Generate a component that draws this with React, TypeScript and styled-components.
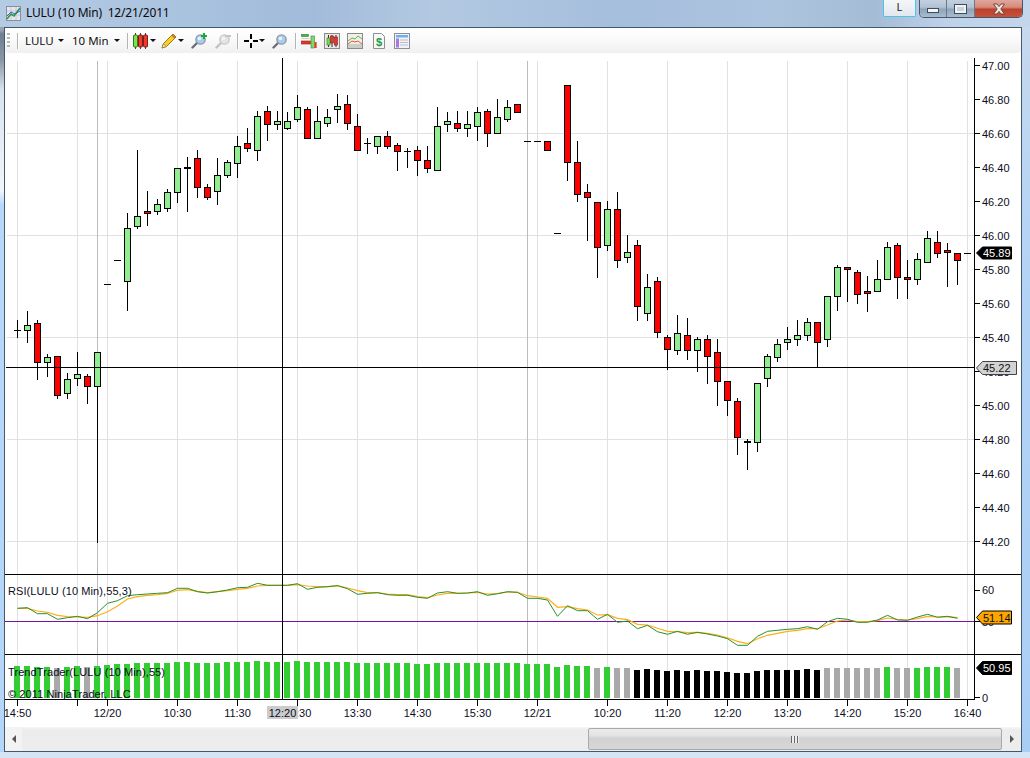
import React from "react";
import styled, { createGlobalStyle } from "styled-components";

const Global = createGlobalStyle`
  html, body { margin: 0; padding: 0; background: #b9d9fb; overflow: hidden; }
`;

const Frame = styled.div`
  width: 1030px;
  height: 758px;
  box-sizing: border-box;
  display: flex;
  flex-direction: column;
  padding: 0 8px 6px 4px;
  font-family: "Noto Sans", "Liberation Sans", sans-serif;
  background:
    linear-gradient(90deg, #b4cbe4 0%, #a9c2de 18%, #a2bbda 30%, #b3c9e2 42%, #a5bedc 60%, #adc4df 75%, #a5bcd7 85%, #bed2e9 92%, #c3d6eb 100%) top / 100% 27px no-repeat,
    linear-gradient(180deg, #d5e5f5 0%, #d5e5f5 100%) bottom / 100% 6px no-repeat,
    linear-gradient(180deg, #9aa4b0 0px, #9aa4b0 30px, #6d7f92 34px, #8b97a4 60px, #d9e3ee 90px, #f2f6fb 190px, #b7d8fb 205px, #b4d6fb 100%) left / 4px 100% no-repeat,
    linear-gradient(180deg, #c8d9ec 0%, #b5d4f6 30%, #a9cef6 100%);
`;

const TitleBar = styled.div`
  height: 27px;
  display: flex;
  align-items: flex-start;
  flex: none;
`;

const TitleIcon = styled.svg`
  width: 15px;
  height: 15px;
  margin: 6px 0 0 2px;
  flex: none;
`;

const TitleText = styled.div`
  margin: 5px 0 0 5px;
  font-size: 12px;
  letter-spacing: -0.2px;
  line-height: 16px;
  color: #0a0a0a;
  white-space: pre;
`;

const WindowButtons = styled.div`
  margin-left: auto;
  display: flex;
  align-items: flex-start;
  margin-right: -1px;
`;

const LButton = styled.div`
  width: 31px;
  height: 16px;
  margin-right: 3px;
  border: 1px solid #4fc3e8;
  border-top: none;
  border-radius: 0 0 2px 2px;
  background: linear-gradient(180deg, #f4f6f8, #e3e8ee);
  font-size: 11px;
  line-height: 14px;
  text-align: center;
  color: #222;
`;

const CaptionGroup = styled.div`
  display: flex;
  height: 17px;
  border: 1px solid #45586c;
  border-top: none;
  border-radius: 0 0 5px 5px;
  overflow: hidden;
`;

const CaptionBtn = styled.div<{ $w: number; $close?: boolean }>`
  width: ${(p) => p.$w}px;
  display: flex;
  align-items: center;
  justify-content: center;
  border-left: ${(p) => (p.$w === 26 ? "none" : "1px solid #66788c")};
  background: ${(p) =>
    p.$close
      ? "linear-gradient(180deg, #dfa79c 0%, #d9897a 42%, #b8432c 55%, #c9513a 100%)"
      : "linear-gradient(180deg, #c3d0de 0%, #b2c2d3 42%, #8fa4ba 55%, #a9bccf 100%)"};
`;

const MinGlyph = styled.div`
  width: 10px;
  height: 3px;
  margin-top: 4px;
  background: #f4f6f8;
  border: 1px solid #3e4c5c;
`;

const MaxGlyph = styled.div`
  width: 7px;
  height: 4px;
  background: #c8d3de;
  border: 2px solid #f0f3f6;
  outline: 1px solid #3e4c5c;
`;

const Window = styled.div`
  flex: 1;
  min-height: 0;
  display: flex;
  flex-direction: column;
  border: 1px solid #46586b;
  background: #fff;
`;

const Toolbar = styled.div`
  height: 25px;
  flex: none;
  display: flex;
  align-items: center;
  box-sizing: border-box;
  background: linear-gradient(180deg, #ffffff 0%, #fafafa 45%, #f0f0f0 100%);
  border-radius: 0 0 4px 4px;
  font-size: 12px;
  color: #111;
`;

const Grip = styled.div`
  width: 3px;
  height: 15px;
  margin-left: 2px;
  background: repeating-linear-gradient(180deg, #b8b8b8 0 2px, transparent 2px 4px);
`;

const Sep = styled.div<{ $ml: number }>`
  width: 1px;
  height: 16px;
  margin-left: ${(p) => p.$ml}px;
  background: #b4b4b4;
  box-shadow: 1px 0 0 #fff;
`;

const ToolLabel = styled.span<{ $ml: number; $w: number }>`
  margin-left: ${(p) => p.$ml}px;
  width: ${(p) => p.$w}px;
  font-size: 11.5px;
  white-space: nowrap;
`;

const Caret = styled.span<{ $ml: number }>`
  margin-left: ${(p) => p.$ml}px;
  width: 0;
  height: 0;
  border-left: 3px solid transparent;
  border-right: 3px solid transparent;
  border-top: 3px solid #111;
`;

const ToolIcon = styled.svg<{ $ml: number }>`
  margin-left: ${(p) => p.$ml}px;
  width: 16px;
  height: 16px;
  flex: none;
`;

const ChartSvg = styled.svg`
  display: block;
  flex: none;
  width: 1016px;
  height: 674px;
`;

const AxisText = styled.text`
  font-family: "Liberation Sans", Arial, sans-serif;
  font-size: 11px;
  fill: #0c0c1c;
`;

const PanelLabel = styled(AxisText)`
  letter-spacing: 0.09px;
`;

const ScrollBar = styled.div`
  flex: 1;
  display: flex;
  align-items: stretch;
  background: linear-gradient(180deg, #f6f6f6 0, #ececec 3px, #ededed 100%);
`;

const ScrollArrow = styled.div<{ $w: number; $dir: "left" | "right" }>`
  width: ${(p) => p.$w}px;
  flex: none;
  display: flex;
  align-items: center;
  justify-content: center;
  background: ${(p) => (p.$dir === "left" ? "#f3f3f3" : "transparent")};
  &::before {
    content: "";
    border-top: 4px solid transparent;
    border-bottom: 4px solid transparent;
    ${(p) => (p.$dir === "left" ? "border-right: 4px solid #555;" : "border-left: 4px solid #555;")}
  }
`;

const ScrollTrack = styled.div`
  width: 566px;
  flex: none;
`;

const ScrollThumb = styled.div`
  width: 414px;
  flex: none;
  margin: 1px 0 1px 0;
  box-sizing: border-box;
  border: 1px solid #a9a9a9;
  border-radius: 2px;
  background: linear-gradient(180deg, #ececec 0%, #e2e2e2 35%, #d2d2d2 45%, #d6d6d6 100%);
  display: flex;
  align-items: center;
  justify-content: center;
`;

const Gripper = styled.div`
  width: 8px;
  height: 7px;
  background: repeating-linear-gradient(90deg, #666 0 1px, #eee 1px 3px);
`;

type K = "g" | "r" | "x" | "d";
type C = [number, number, number, number, K];
const candles: C[] = [
  [320, 337, 330, 330, "x"],
  [311, 342, 325, 330, "g"],
  [320, 379, 323, 362, "r"],
  [354, 376, 357, 362, "g"],
  [356, 398, 356, 395, "r"],
  [373, 398, 379, 393, "g"],
  [352, 385, 374, 378, "g"],
  [374, 403, 376, 386, "r"],
  [352, 542, 352, 386, "g"],
  [284, 284, 284, 284, "d"],
  [260, 260, 260, 260, "d"],
  [213, 310, 228, 281, "g"],
  [150, 228, 216, 226, "g"],
  [191, 225, 211, 213, "r"],
  [199, 214, 204, 211, "g"],
  [189, 211, 192, 208, "g"],
  [168, 202, 168, 192, "g"],
  [157, 211, 167, 168, "g"],
  [150, 197, 158, 187, "r"],
  [184, 199, 187, 197, "r"],
  [158, 204, 175, 191, "g"],
  [160, 177, 162, 175, "g"],
  [136, 177, 146, 163, "g"],
  [128, 151, 143, 148, "r"],
  [111, 160, 116, 150, "g"],
  [106, 140, 111, 124, "r"],
  [111, 129, 121, 124, "g"],
  [112, 129, 121, 128, "g"],
  [95, 121, 107, 119, "g"],
  [107, 138, 109, 138, "r"],
  [106, 138, 121, 138, "g"],
  [109, 126, 117, 123, "g"],
  [94, 122, 106, 109, "g"],
  [95, 129, 104, 123, "r"],
  [114, 150, 126, 150, "r"],
  [138, 153, 143, 143, "x"],
  [136, 153, 136, 146, "g"],
  [131, 148, 136, 146, "r"],
  [143, 170, 145, 151, "r"],
  [148, 167, 151, 151, "x"],
  [146, 175, 150, 160, "r"],
  [146, 172, 160, 168, "r"],
  [107, 170, 126, 170, "g"],
  [112, 131, 121, 124, "g"],
  [111, 131, 123, 128, "r"],
  [111, 136, 124, 128, "g"],
  [107, 140, 112, 126, "g"],
  [109, 146, 111, 133, "r"],
  [99, 133, 117, 133, "g"],
  [100, 121, 107, 119, "g"],
  [104, 112, 104, 112, "r"],
  [141, 141, 141, 141, "d"],
  [141, 141, 141, 141, "d"],
  [141, 150, 141, 150, "r"],
  [233, 233, 233, 233, "d"],
  [85, 180, 85, 162, "r"],
  [141, 201, 162, 194, "r"],
  [184, 240, 192, 197, "r"],
  [202, 277, 202, 247, "r"],
  [201, 250, 209, 245, "g"],
  [192, 267, 209, 260, "r"],
  [235, 262, 252, 257, "g"],
  [240, 320, 245, 306, "r"],
  [274, 320, 287, 313, "g"],
  [277, 337, 281, 332, "r"],
  [335, 369, 337, 349, "r"],
  [315, 354, 333, 350, "g"],
  [318, 359, 335, 350, "r"],
  [337, 371, 339, 350, "g"],
  [335, 383, 339, 356, "r"],
  [339, 405, 352, 381, "r"],
  [381, 415, 381, 400, "r"],
  [398, 454, 401, 437, "r"],
  [439, 469, 441, 442, "g"],
  [383, 451, 383, 442, "g"],
  [354, 386, 356, 378, "g"],
  [339, 361, 344, 357, "g"],
  [327, 349, 339, 342, "g"],
  [320, 345, 335, 339, "g"],
  [318, 340, 322, 335, "g"],
  [322, 367, 322, 342, "r"],
  [296, 346, 296, 339, "g"],
  [265, 310, 267, 296, "g"],
  [267, 301, 267, 269, "r"],
  [270, 303, 272, 294, "r"],
  [276, 311, 291, 293, "r"],
  [260, 291, 279, 291, "g"],
  [242, 279, 247, 279, "g"],
  [243, 298, 245, 277, "r"],
  [260, 298, 277, 279, "r"],
  [253, 284, 259, 279, "g"],
  [231, 262, 238, 262, "g"],
  [231, 257, 242, 253, "r"],
  [243, 286, 250, 252, "r"],
  [253, 284, 253, 260, "r"],
];

const barTops = [
  666, 666, 667, 667, 668, 667, 666, 667, 666, 665,
  664, 664, 663, 663, 663, 663, 662, 662, 663, 663,
  663, 662, 662, 662, 661, 662, 662, 662, 661, 662,
  662, 662, 662, 662, 663, 663, 663, 663, 663, 663,
  664, 664, 663, 663, 663, 663, 663, 663, 663, 663,
  663, 664, 664, 664, 667, 665, 666, 666, 668, 667,
  668, 668, 670, 669, 670, 671, 670, 671, 670, 671,
  671, 672, 673, 673, 671, 670, 670, 670, 670, 669,
  670, 668, 668, 668, 668, 668, 668, 667, 668, 668,
  668, 667, 667, 667, 668,
];

const rsiGreen = [
  115, 113, 131, 131, 148, 143, 139, 146, 128, 100,
  92, 77, 74, 72, 70, 68, 55, 55, 65, 69,
  65, 60, 53, 52, 40, 46, 46, 46, 41, 58,
  52, 50, 47, 56, 73, 70, 68, 74, 76, 76,
  82, 85, 69, 65, 70, 69, 65, 76, 71, 65,
  67, 85, 85, 90, 139, 107, 122, 122, 148, 133,
  157, 153, 176, 166, 185, 193, 184, 193, 187, 192,
  198, 206, 226, 226, 199, 184, 181, 178, 176, 170,
  178, 155, 145, 148, 157, 157, 150, 136, 150, 151,
  141, 133, 142, 139, 145,
];

const rsiOrange = [
  115, 115, 123, 127, 136, 140, 141, 142, 137, 125,
  108, 87, 80, 76, 74, 70, 61, 59, 64, 68,
  65, 62, 58, 55, 48, 46, 46, 46, 44, 48,
  50, 50, 47, 54, 62, 68, 68, 72, 74, 74,
  80, 83, 75, 70, 70, 69, 67, 72, 71, 66,
  67, 77, 81, 85, 112, 110, 116, 120, 135, 134,
  145, 149, 163, 165, 175, 184, 185, 188, 187, 190,
  195, 203, 214, 221, 206, 196, 190, 184, 181, 176,
  176, 165, 153, 150, 155, 155, 152, 144, 148, 150,
  146, 139, 141, 140, 143,
];

const xOf = (i: number) => 17 + i * 10;
const GRAY = new Set([57, 87, 597, 617, 627, 827, 837, 847, 857, 867, 877, 897, 907, 957]);
const barColor = (x: number) =>
  GRAY.has(x) ? "#a9a9a9" : x >= 637 && x <= 817 ? "#000" : "#32cd32";

const rsiPoints = (arr: number[]) =>
  arr.map((v, i) => `${xOf(i) + 0.5},${(570 + v / 3).toFixed(1)}`).join(" ");

const vGrid = [17, 77, 107, 177, 237, 297, 357, 417, 477, 537, 607, 667, 727, 787, 847, 907, 967];
const hGrid = [133, 235, 337, 439, 541];
const prices = [
  "47.00", "46.80", "46.60", "46.40", "46.20", "46.00", "45.80", "45.60", "45.40",
  "45.20", "45.00", "44.80", "44.60", "44.40", "44.20",
];
const timeLabels: [number, string][] = [
  [17, "14:50"], [107, "12/20"], [177, "10:30"], [237, "11:30"], [297, "12:30"],
  [357, "13:30"], [417, "14:30"], [477, "15:30"], [537, "12/21"], [607, "10:20"],
  [667, "11:20"], [727, "12:20"], [787, "13:20"], [847, "14:20"], [907, "15:20"], [967, "16:40"],
];
const timeTicks = [17, 77, 107, 177, 237, 297, 357, 417, 477, 537, 607, 667, 727, 787, 847, 907, 967];

const Candle: React.FC<{ c: C; x: number }> = ({ c, x }) => {
  const [hi, lo, top, bot, k] = c;
  const cx = x + 0.5;
  if (k === "d") return <line x1={x - 3} x2={x + 4} y1={top + 0.5} y2={top + 0.5} stroke="#000" />;
  if (k === "x")
    return (
      <g stroke="#000">
        <line x1={cx} x2={cx} y1={hi} y2={lo + 1} />
        <line x1={x - 3} x2={x + 4} y1={top + 0.5} y2={top + 0.5} />
      </g>
    );
  return (
    <g stroke="#000">
      <line x1={cx} x2={cx} y1={hi} y2={lo + 1} />
      <rect
        x={x - 3 + 0.5}
        y={top + 0.5}
        width={6}
        height={bot - top}
        fill={k === "g" ? "#90ee90" : "#ff0000"}
      />
    </g>
  );
};

const Flag: React.FC<{ y: number; right: number; h: number; fill: string; color: string; stroke: string; text: string }> = ({
  y, right, h, fill, color, stroke, text,
}) => (
  <g>
    <polygon
      points={`976.5,${y} 982.5,${y - h} ${right},${y - h} ${right},${y + h} 982.5,${y + h}`}
      fill={fill}
      stroke={stroke}
    />
    <AxisText x={983} y={y + 4} style={{ fill: color }}>
      {text}
    </AxisText>
  </g>
);

const Chart = () => (
  <ChartSvg viewBox="5 53 1016 674" shapeRendering="crispEdges">
    <g stroke="#e1e1e1">
      {vGrid.map((x) => (
        <line key={x} x1={x + 0.5} x2={x + 0.5} y1={61} y2={699} />
      ))}
      {hGrid.map((y) => (
        <line key={y} x1={7} x2={974} y1={y + 0.5} y2={y + 0.5} />
      ))}
    </g>
    <g stroke="#bcbcbc">
      <line x1={97.5} x2={97.5} y1={61} y2={699} />
      <line x1={527.5} x2={527.5} y1={61} y2={699} />
    </g>
    {candles.map((c, i) => (
      <Candle key={i} c={c} x={xOf(i)} />
    ))}
    <line x1={964} x2={971} y1={253.5} y2={253.5} stroke="#000" />

    <line x1={5} x2={974} y1={621.5} y2={621.5} stroke="#7a12a6" />
    <g shapeRendering="geometricPrecision" fill="none">
      <polyline points={rsiPoints(rsiOrange)} stroke="#ffae1a" strokeWidth={1.2} />
      <polyline points={rsiPoints(rsiGreen)} stroke="#2a8f2a" strokeWidth={1} />
    </g>

    {barTops.map((t, i) => (
      <rect key={i} x={xOf(i) - 3} y={t} width={6} height={698 - t} fill={barColor(xOf(i))} />
    ))}

    <g stroke="#000">
      <line x1={5} x2={1021} y1={574.5} y2={574.5} />
      <line x1={5} x2={1021} y1={654.5} y2={654.5} />
      <line x1={5} x2={975} y1={699.5} y2={699.5} />
      <line x1={974.5} x2={974.5} y1={58} y2={700} />
      <line x1={282.5} x2={282.5} y1={58} y2={700} />
      <line x1={6} x2={974} y1={367.5} y2={367.5} />
      {prices.map((_, i) => (
        <line key={i} x1={975} x2={980} y1={65.5 + 34 * i} y2={65.5 + 34 * i} />
      ))}
      <line x1={975} x2={980} y1={590.5} y2={590.5} />
      <line x1={975} x2={980} y1={621.5} y2={621.5} />
      <line x1={975} x2={980} y1={697.5} y2={697.5} />
      {timeTicks.map((x) => (
        <line key={x} x1={x + 0.5} x2={x + 0.5} y1={700} y2={706} />
      ))}
    </g>

    <g shapeRendering="geometricPrecision">
      {prices.map((p, i) => (
        <AxisText key={p} x={982} y={70 + 34 * i}>
          {p}
        </AxisText>
      ))}
      <AxisText x={982} y={594}>60</AxisText>
      <AxisText x={982} y={626}>50</AxisText>
      <AxisText x={982} y={702}>0</AxisText>
      {timeLabels.map(([x, t]) => (
        <AxisText key={x} x={x + 0.5} y={717} textAnchor="middle">
          {t}
        </AxisText>
      ))}
      <rect x={267} y={706} width={31} height={13} fill="#cccccc" shapeRendering="crispEdges" />
      <AxisText x={282.5} y={717} textAnchor="middle">12:20</AxisText>

      <PanelLabel x={8} y={595}>RSI(LULU (10 Min),55,3)</PanelLabel>
      <PanelLabel x={8} y={676}>TrendTrader(LULU (10 Min),55)</PanelLabel>
      <PanelLabel x={8} y={698}>© 2011 NinjaTrader, LLC</PanelLabel>

      <Flag y={253} right={1011.5} h={6} fill="#000" color="#fff" stroke="#000" text="45.89" />
      <Flag y={368} right={1016.5} h={6.5} fill="#d3d3d3" color="#111" stroke="#444" text="45.22" />
      <Flag y={617.5} right={1011.5} h={6.5} fill="#ffa500" color="#111" stroke="#000" text="51.14" />
      <Flag y={668} right={1011.5} h={6.5} fill="#000" color="#fff" stroke="#000" text="50.95" />
    </g>
  </ChartSvg>
);

const MagnifierArt: React.FC<{ gray?: boolean }> = ({ gray }) => (
  <>
    <line x1="1.5" y1="14.5" x2="6" y2="10" stroke={gray ? "#c2c2c2" : "#6a6f78"} strokeWidth="2.4" strokeLinecap="round" />
    <circle cx="9.5" cy="6.5" r="4.6" fill={gray ? "#e4e4e4" : "#a9cdf0"} stroke={gray ? "#c8c8c8" : "#8f98a6"} strokeWidth="1.4" />
    <circle cx="8.5" cy="5.5" r="1.8" fill="#fff" opacity={gray ? 0.5 : 0.75} />
  </>
);

const App = () => (
  <>
    <Global />
    <Frame>
      <TitleBar>
        <TitleIcon viewBox="0 0 15 15">
          <rect x="0.5" y="0.5" width="14" height="14" fill="#e6e6ee" stroke="#8b8f9c" />
          <path d="M1 5h13M1 9h13M5 1v13M10 1v13" stroke="#c4c6d2" />
          <polyline points="1,13 5,8 8,10 14,2" fill="none" stroke="#2f9a3a" strokeWidth="1.6" />
          <polyline points="1,10 5,6 9,8 14,5" fill="none" stroke="#2a62c8" strokeWidth="1" />
        </TitleIcon>
        <TitleText>{"LULU (10 Min)  12/21/2011"}</TitleText>
        <WindowButtons>
          <LButton>L</LButton>
          <CaptionGroup>
            <CaptionBtn $w={26}>
              <MinGlyph />
            </CaptionBtn>
            <CaptionBtn $w={27}>
              <MaxGlyph />
            </CaptionBtn>
            <CaptionBtn $w={47} $close>
              <svg width="16" height="12" viewBox="0 0 16 12">
                <path d="M2.5 1 L6 1 L8 3.6 L10 1 L13.5 1 L9.8 6 L13.5 11 L10 11 L8 8.4 L6 11 L2.5 11 L6.2 6 Z" fill="#f0e6e4" stroke="#6a3a32" strokeWidth="0.9" />
              </svg>
            </CaptionBtn>
          </CaptionGroup>
        </WindowButtons>
      </TitleBar>
      <Window>
        <Toolbar>
          <Grip />
          <Sep $ml={7} />
          <ToolLabel $ml={7} $w={27}>LULU</ToolLabel>
          <Caret $ml={6} />
          <ToolLabel $ml={8} $w={37}>10 Min</ToolLabel>
          <Caret $ml={5} />
          <Sep $ml={7} />
          <ToolIcon $ml={5} viewBox="0 0 16 16">
            <path d="M2.5 0v16M7.5 0v16M12.5 0v16" stroke="#444" />
            <rect x="0.5" y="2" width="4" height="12" rx="1" fill="#7fe04a" stroke="#2f7a1e" />
            <rect x="5.5" y="2" width="4" height="12" rx="1" fill="#f03a2a" stroke="#7a1e1e" />
            <rect x="10.5" y="2" width="4" height="12" rx="1" fill="#f03a2a" stroke="#7a1e1e" />
          </ToolIcon>
          <Caret $ml={1} />
          <ToolIcon $ml={5} viewBox="0 0 16 16">
            <path d="M1 15 L2.5 10.5 L12 1 L15 4 L5.5 13.5 Z" fill="#f6cf2e" stroke="#a27a14" />
            <path d="M1 15 L2.5 10.5 L5.5 13.5 Z" fill="#f3dfb0" stroke="#8a6a2a" strokeWidth="0.6" />
            <path d="M11 2 L14 5" stroke="#c9662a" strokeWidth="1.6" />
          </ToolIcon>
          <Caret $ml={1} />
          <ToolIcon $ml={7} viewBox="0 0 16 16">
            <MagnifierArt />
            <path d="M13 0v6M10 3h6" stroke="#19a83a" strokeWidth="2" />
          </ToolIcon>
          <ToolIcon $ml={8} viewBox="0 0 16 16">
            <MagnifierArt gray />
            <path d="M10 3h6" stroke="#c4c4c4" strokeWidth="2" />
          </ToolIcon>
          <Sep $ml={6} />
          <ToolIcon $ml={5} viewBox="0 0 16 16" shapeRendering="crispEdges">
            <path d="M8 1v5M8 10v5M1 8h5M10 8h5" stroke="#000" strokeWidth="2" />
          </ToolIcon>
          <Caret $ml={0} />
          <ToolIcon $ml={7} viewBox="0 0 16 16">
            <MagnifierArt />
          </ToolIcon>
          <Sep $ml={7} />
          <ToolIcon $ml={5} viewBox="0 0 16 16">
            <rect x="0.5" y="1.5" width="7" height="2" fill="#4fb23a" stroke="#38762c" strokeWidth="0.6" />
            <rect x="0.5" y="8" width="9" height="3" fill="#e8362a" stroke="#8b1e1a" strokeWidth="0.6" />
            <rect x="0.5" y="5" width="8" height="1" fill="#cfcfcf" />
            <rect x="10" y="3" width="3.4" height="12" fill="#7fd86a" stroke="#3a8a2c" strokeWidth="0.6" />
            <rect x="13.6" y="9" width="2" height="6" fill="#e8362a" />
          </ToolIcon>
          <ToolIcon $ml={7} viewBox="0 0 16 16">
            <rect x="0.5" y="0.5" width="15" height="15" fill="#e8e8e8" stroke="#8a8a8a" />
            <path d="M4.5 2v12M8 2v12M12 2v12" stroke="#333" />
            <rect x="3" y="5" width="3" height="7" fill="#79e04a" stroke="#2d7a1e" strokeWidth="0.6" />
            <rect x="6.5" y="3" width="3" height="7" fill="#e8362a" stroke="#7a1e1e" strokeWidth="0.6" />
            <rect x="10.5" y="4" width="3" height="8" fill="#e8362a" stroke="#7a1e1e" strokeWidth="0.6" />
          </ToolIcon>
          <ToolIcon $ml={7} viewBox="0 0 16 16">
            <rect x="0.5" y="0.5" width="15" height="15" fill="#efefe6" stroke="#8a8a8a" />
            <rect x="1" y="11" width="14" height="4" fill="#c9cfc4" />
            <polyline points="1,8 5,5 8,6 11,3 15,6" fill="none" stroke="#5fb85a" />
            <polyline points="1,11 5,8 8,9 11,8 15,11" fill="none" stroke="#e3574a" />
          </ToolIcon>
          <ToolIcon $ml={8} viewBox="0 0 16 16">
            <path d="M2.5 0.5h8l3 3v12h-11z" fill="#f7f7f7" stroke="#8f8f8f" />
            <text x="8" y="13" textAnchor="middle" fontSize="11" fontWeight="700" fontFamily="Liberation Sans, sans-serif" fill="#1f9a3a">$</text>
          </ToolIcon>
          <ToolIcon $ml={7} viewBox="0 0 16 16">
            <rect x="0.5" y="0.5" width="15" height="15" fill="#f3f3f7" stroke="#8a8f9a" />
            <rect x="2" y="2" width="12" height="2.5" fill="#6fb0e8" />
            <rect x="2" y="5.5" width="3" height="9" fill="#a77ae0" />
            <path d="M6 7h8M6 9.5h8M6 12h8" stroke="#b9bcc8" />
          </ToolIcon>
        </Toolbar>
        <Chart />
        <ScrollBar>
          <ScrollArrow $w={17} $dir="left" />
          <ScrollTrack />
          <ScrollThumb>
            <Gripper />
          </ScrollThumb>
          <ScrollArrow $w={19} $dir="right" />
        </ScrollBar>
      </Window>
    </Frame>
  </>
);

export default App;
